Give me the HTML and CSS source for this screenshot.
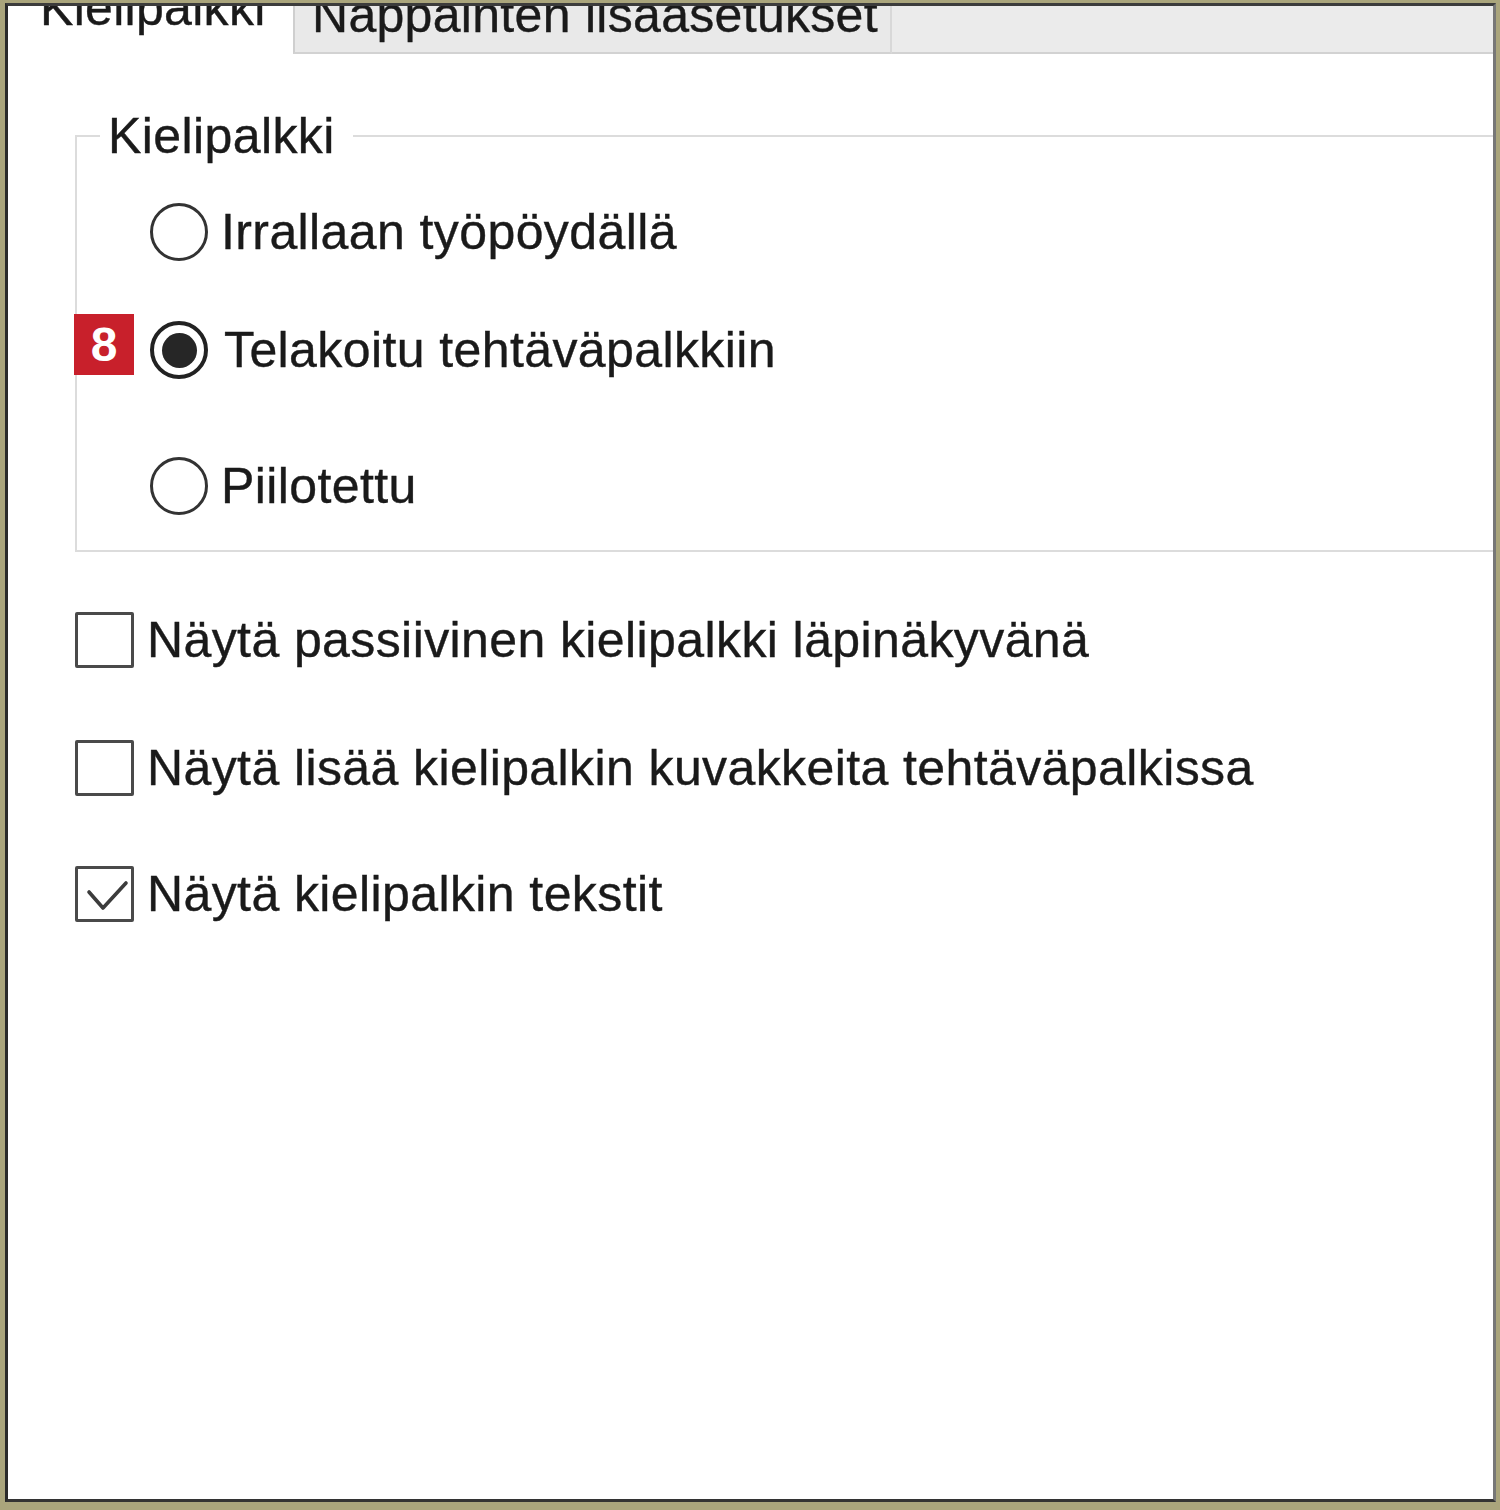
FILE: index.html
```html
<!DOCTYPE html>
<html lang="fi">
<head>
<meta charset="utf-8">
<title>Kielipalkki</title>
<link rel="stylesheet" href="styles.css">
</head>
<body>
<div class="window">
  <div class="tabs">
    <div class="tab tab-active"><span class="tab-label tab-label-active">Kielipalkki</span></div>
    <div class="tab tab-inactive"><span class="tab-label">Näppäinten lisäasetukset</span></div>
    <div class="tab-rest"></div>
  </div>
  <div class="content">
    <fieldset class="group">
      <legend class="group-title">Kielipalkki</legend>
      <div class="options">
        <div class="opt-row">
          <span class="radio"></span>
          <span class="label">Irrallaan työpöydällä</span>
        </div>
        <div class="opt-row opt-row-2">
          <span class="badge">8</span>
          <span class="radio radio-on"><span class="dot"></span></span>
          <span class="label label-shift">Telakoitu tehtäväpalkkiin</span>
        </div>
        <div class="opt-row opt-row-3">
          <span class="radio"></span>
          <span class="label">Piilotettu</span>
        </div>
      </div>
    </fieldset>
    <div class="checks">
      <div class="check-row">
        <span class="box"></span>
        <span class="label">Näytä passiivinen kielipalkki läpinäkyvänä</span>
      </div>
      <div class="check-row check-row-2">
        <span class="box"></span>
        <span class="label">Näytä lisää kielipalkin kuvakkeita tehtäväpalkissa</span>
      </div>
      <div class="check-row check-row-3">
        <span class="box"><svg class="tick" width="59" height="56" viewBox="0 0 59 56"><path d="M14 26 L28 42 L51 17" fill="none" stroke="#3c3c3c" stroke-width="3.6" stroke-linecap="round" stroke-linejoin="round"/></svg></span>
        <span class="label">Näytä kielipalkin tekstit</span>
      </div>
    </div>
  </div>
</div>
</body>
</html>
```

FILE: styles.css
```css
html, body {
  margin: 0;
  padding: 0;
}
body {
  background: #aaa57c;
  padding: 3px 4px 0 5px;
  font-family: "Liberation Sans", Arial, sans-serif;
  color: #1a1a1a;
}
.window {
  width: 1491px;
  height: 1499px;
  box-sizing: border-box;
  background: #ffffff;
  border-left: 3px solid #2a2a2a;
  border-top: 3px solid #3c3c3c;
  border-right: 3px solid #777777;
  border-bottom: 3px solid #333333;
  overflow: hidden;
  display: flex;
  flex-direction: column;
}
.tabs {
  display: flex;
  height: 48px;
  flex: none;
  background: #ebebeb;
  overflow: hidden;
}
.tab {
  box-sizing: border-box;
  height: 48px;
  overflow: hidden;
  flex: none;
}
.tab-label {
  display: block;
  font-size: 50px;
  line-height: 50px;
  white-space: nowrap;
  margin-top: -16px;
  letter-spacing: 0.3px;
  -webkit-text-stroke: 0.4px #1a1a1a;
}
.tab-label-active {
  margin-top: -23px;
}
.tab-active {
  width: 285px;
  background: #ffffff;
  padding-left: 32px;
}
.tab-inactive {
  width: 599px;
  background: #e9e9e9;
  border-left: 2px solid #cfcfcf;
  border-right: 2px solid #d8d8d8;
  border-bottom: 2px solid #d2d2d2;
  padding-left: 17px;
}
.tab-rest {
  flex: 1;
  border-bottom: 2px solid #d2d2d2;
}
.content {
  padding: 57px 0 0 67px;
}
.group {
  margin: 0;
  padding: 0;
  border: 2px solid #dcdcdc;
  width: 1500px;
  min-width: 0;
}
.group-title {
  margin-left: 23px;
  padding: 0 18px 0 8px;
  font-size: 50px;
  line-height: 50px;
  white-space: nowrap;
  letter-spacing: 0.4px;
  -webkit-text-stroke: 0.4px #1a1a1a;
}
.options {
  padding: 41px 0 34px 73px;
}
.opt-row {
  display: flex;
  align-items: center;
  height: 60px;
  gap: 13px;
}
.opt-row-2 {
  position: relative;
  margin-top: 58px;
}
.opt-row-3 {
  margin-top: 76px;
}
.label {
  font-size: 50px;
  line-height: 60px;
  white-space: nowrap;
  letter-spacing: 0.4px;
  -webkit-text-stroke: 0.4px #1a1a1a;
}
.label-shift {
  margin-left: 3px;
}
.radio {
  box-sizing: border-box;
  width: 58px;
  height: 58px;
  flex: none;
  border-radius: 50%;
  border: 3px solid #333333;
  background: #ffffff;
  display: flex;
  align-items: center;
  justify-content: center;
}
.radio-on {
  border-width: 4px;
  border-color: #222222;
}
.dot {
  width: 35px;
  height: 35px;
  border-radius: 50%;
  background: #262626;
}
.badge {
  position: absolute;
  left: -76px;
  top: -6px;
  width: 60px;
  height: 61px;
  background: #c8202b;
  color: #ffffff;
  font-family: "Liberation Sans", Arial, sans-serif;
  font-weight: bold;
  font-size: 48px;
  line-height: 61px;
  text-align: center;
}
.checks {
  margin-top: 58px;
}
.check-row {
  display: flex;
  align-items: center;
  height: 60px;
  gap: 13px;
}
.check-row-2 {
  margin-top: 68px;
}
.check-row-3 {
  margin-top: 66px;
}
.box {
  box-sizing: border-box;
  width: 59px;
  height: 56px;
  flex: none;
  border: 3px solid #4a4a4a;
  border-radius: 2px;
  background: #ffffff;
  position: relative;
}
.tick {
  position: absolute;
  left: -3px;
  top: -3px;
}
```
